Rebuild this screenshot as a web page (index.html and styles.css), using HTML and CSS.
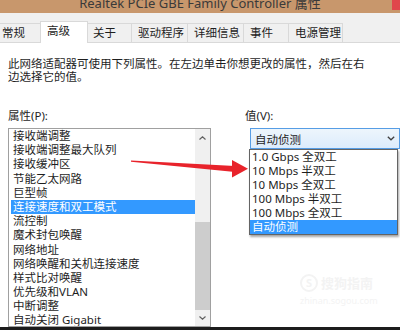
FILE: index.html
```html
<!DOCTYPE html>
<html lang="zh-CN">
<head>
    <meta charset="UTF-8">
    <meta name="viewport" content="width=device-width, initial-scale=1.0">
    <title>Realtek PCIe GBE Family Controller 属性</title>
    <link rel="stylesheet" href="styles.css">
</head>
<body>

    <div class="window">
        <div class="titlebar">
            <span class="title">Realtek PCIe GBE Family Controller 属性</span>
            <span class="close"></span>
        </div>

        <div class="tabs">
            <div class="tab tab-general">常规</div>
            <div class="tab tab-advanced active">高级</div>
            <div class="tab tab-about">关于</div>
            <div class="tab tab-driver">驱动程序</div>
            <div class="tab tab-details">详细信息</div>
            <div class="tab tab-events">事件</div>
            <div class="tab tab-power">电源管理</div>
        </div>

        <div class="page">
            <p class="desc">此网络适配器可使用下列属性。在左边单击你想更改的属性，然后在右<br>边选择它的值。</p>

            <div class="columns">
                <div class="col-left">
                    <div class="label">属性(P):</div>
                    <div class="listbox">
                        <ul class="items">
                            <li>接收端调整</li>
                            <li>接收端调整最大队列</li>
                            <li>接收缓冲区</li>
                            <li>节能乙太网路</li>
                            <li>巨型帧</li>
                            <li class="selected">连接速度和双工模式</li>
                            <li>流控制</li>
                            <li>魔术封包唤醒</li>
                            <li>网络地址</li>
                            <li>网络唤醒和关机连接速度</li>
                            <li>样式比对唤醒</li>
                            <li>优先级和VLAN</li>
                            <li>中断调整</li>
                            <li>自动关闭 Gigabit</li>
                        </ul>
                        <div class="scrollbar">
                            <div class="sb-btn">
                                <svg width="7" height="4" viewBox="0 0 7 4"><path d="M0.5 3.5 L3.5 0.8 L6.5 3.5" fill="none" stroke="#606060" stroke-width="1.2"/></svg>
                            </div>
                            <div class="sb-track"><div class="sb-thumb"></div></div>
                            <div class="sb-btn">
                                <svg width="7" height="4" viewBox="0 0 7 4"><path d="M0.5 0.5 L3.5 3.2 L6.5 0.5" fill="none" stroke="#606060" stroke-width="1.2"/></svg>
                            </div>
                        </div>
                    </div>
                </div>

                <div class="col-right">
                    <div class="label">值(V):</div>
                    <div class="combo">
                        <span>自动侦测</span>
                        <svg width="8" height="5" viewBox="0 0 8 5"><path d="M0.8 0.8 L4 3.8 L7.2 0.8" fill="none" stroke="#404040" stroke-width="1.3"/></svg>
                    </div>
                    <ul class="dropdown">
                        <li>1.0 Gbps 全双工</li>
                        <li>10 Mbps 半双工</li>
                        <li>10 Mbps 全双工</li>
                        <li>100 Mbps 半双工</li>
                        <li>100 Mbps 全双工</li>
                        <li class="selected">自动侦测</li>
                    </ul>
                </div>
            </div>
        </div>

        <div class="bottom-edge"></div>
    </div>

    <svg class="arrow" width="400" height="330" viewBox="0 0 400 330">
        <polygon points="131,160.5 235,166 235,172 131,161.8" fill="#e8232b"/>
        <polygon points="232,160 248,168.8 232,177.5" fill="#e8232b"/>
    </svg>

    <div class="watermark">
        <div class="wm-row"><span class="wm-logo">S</span><span class="wm-name">搜狗指南</span></div>
        <div class="wm-url">zhinan.sogou.com</div>
    </div>

</body>
</html>
```

FILE: styles.css
```css
body {
    margin: 0;
    width: 400px;
    height: 330px;
    overflow: hidden;
    position: relative;
    background: #ffffff;
    font-family: "Noto Sans", "Noto Sans CJK SC", sans-serif;
    font-size: 11.5px;
    color: #1e1e1e;
}

ul {
    list-style: none;
    margin: 0;
    padding: 0;
}

.window {
    display: flex;
    flex-direction: column;
    height: 330px;
}

/* title bar, only its lower edge is visible */
.titlebar {
    height: 13px;
    flex-shrink: 0;
    background: #c8976c;
    display: flex;
    justify-content: center;
    align-items: flex-end;
    overflow: hidden;
    position: relative;
}

.title {
    font-size: 13px;
    line-height: 13px;
    margin-bottom: 3.5px;
    color: #3a3a3a;
    white-space: nowrap;
}

.close {
    position: absolute;
    right: 0;
    top: 0;
    width: 8px;
    height: 10px;
    background: #e0474c;
}

/* tabs */
.tabs {
    height: 30px;
    flex-shrink: 0;
    box-sizing: border-box;
    background: #f0f0f0;
    border-bottom: 1px solid #d9d9d9;
    display: flex;
    align-items: flex-end;
}

.tab {
    box-sizing: border-box;
    height: 19px;
    line-height: 18px;
    padding-left: 5px;
    border: 1px solid #d9d9d9;
    border-bottom: none;
    margin-right: -1px;
    background: #f0f0f0;
    white-space: nowrap;
}

.tab.active {
    height: 22px;
    margin-bottom: -1px;
    padding-left: 6px;
    background: #ffffff;
    position: relative;
    z-index: 1;
}

.tab-general { width: 41px; padding-left: 2px; border-left: none; }
.tab-advanced { width: 48px; }
.tab-about { width: 45px; }
.tab-driver { width: 57px; padding-left: 6px; }
.tab-details { width: 57px; padding-left: 6px; }
.tab-events { width: 46px; padding-left: 6px; }
.tab-power { width: 55px; padding-left: 6px; }

/* tab page */
.page {
    flex: 1;
    overflow: hidden;
    padding: 15px 0 0 8px;
}

.desc {
    margin: 0;
    line-height: 12.5px;
}

.columns {
    display: flex;
    gap: 34px;
    margin-top: 27px;
}

.label {
    line-height: 12px;
    height: 12px;
    margin-bottom: 6px;
}

.listbox {
    box-sizing: border-box;
    width: 203px;
    height: 199px;
    border: 1px solid #a0a0a0;
    display: flex;
    overflow: hidden;
}

.items {
    flex: 1;
    padding: 0 0 0 1px;
}

.items li {
    line-height: 14.2px;
    height: 14.2px;
    padding-left: 3px;
    white-space: nowrap;
}

.items li.selected {
    background: #3399ff;
    color: #ffffff;
    margin-left: 1px;
    padding-left: 2px;
}

.scrollbar {
    width: 15px;
    display: flex;
    flex-direction: column;
    background: #f0f0f0;
}

.sb-btn {
    height: 17px;
    display: flex;
    justify-content: center;
    align-items: center;
}

.sb-btn:last-child {
    height: 16px;
}

.sb-track {
    flex: 1;
    padding-top: 76px;
}

.sb-thumb {
    height: 88px;
    background: #cdcdcd;
}

/* value column */
.col-right {
    position: relative;
    flex: 1;
}

.combo {
    box-sizing: border-box;
    height: 21px;
    margin-left: 5px;
    padding: 0 4px 0 4px;
    border: 1px solid #569de5;
    background: linear-gradient(#edf5fc, #dcecfc);
    display: flex;
    align-items: center;
    justify-content: space-between;
}

.dropdown {
    position: absolute;
    left: 4px;
    top: 39px;
    width: 149px;
    box-sizing: border-box;
    border: 1px solid #646464;
    background: #ffffff;
    box-shadow: 1px 2px 2px rgba(0, 0, 0, 0.35);
    z-index: 2;
}

.dropdown li {
    height: 14px;
    line-height: 14px;
    padding-left: 2px;
    white-space: nowrap;
}

.dropdown li.selected {
    background: #3399ff;
    color: #ffffff;
}

.bottom-edge {
    height: 3px;
    flex-shrink: 0;
    background: #1c1c1c;
}

/* overlays */
.arrow {
    position: absolute;
    left: 0;
    top: 0;
    z-index: 3;
}

.watermark {
    position: absolute;
    left: 300px;
    top: 273px;
    color: #f3f3f3;
}

.wm-row {
    display: flex;
    align-items: center;
    gap: 3px;
}

.wm-logo {
    width: 14px;
    height: 14px;
    border: 2px solid #f3f3f3;
    border-radius: 50%;
    font-size: 11px;
    font-weight: bold;
    line-height: 14px;
    text-align: center;
}

.wm-name {
    font-size: 13px;
    font-weight: bold;
}

.wm-url {
    font-size: 9px;
    margin-top: 2px;
}
```
